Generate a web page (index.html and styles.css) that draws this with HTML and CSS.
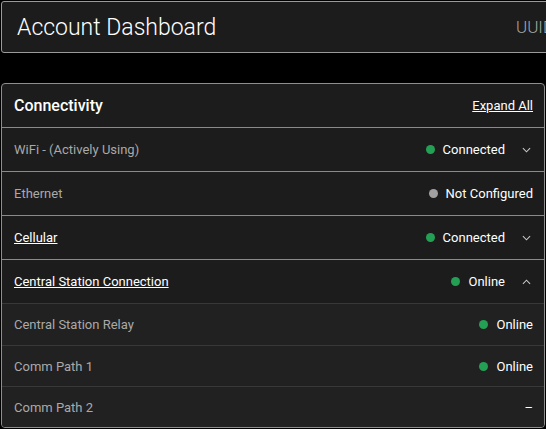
FILE: index.html
```html
<!DOCTYPE html>
<html>
<head>
<meta charset="utf-8">
<link rel="stylesheet" href="styles.css">
</head>
<body>
<div class="page">
  <header class="top-card">
    <h1 class="title">Account Dashboard</h1>
    <span class="uuid">UUID: 7f3c9a2e-4b1d</span>
  </header>

  <section class="card">
    <div class="card-head">
      <h2 class="card-title">Connectivity</h2>
      <a class="expand" href="#">Expand All</a>
    </div>

    <div class="row">
      <span class="label">WiFi - (Actively Using)</span>
      <span class="status"><i class="dot green"></i>Connected</span>
      <svg class="chev" viewBox="0 0 10 6"><path d="M1 1 L5 5 L9 1" /></svg>
    </div>
    <div class="row">
      <span class="label">Ethernet</span>
      <span class="status"><i class="dot gray"></i>Not Configured</span>
    </div>
    <div class="row">
      <a class="label link" href="#">Cellular</a>
      <span class="status"><i class="dot green"></i>Connected</span>
      <svg class="chev" viewBox="0 0 10 6"><path d="M1 1 L5 5 L9 1" /></svg>
    </div>
    <div class="row">
      <a class="label link" href="#">Central Station Connection</a>
      <span class="status"><i class="dot green"></i>Online</span>
      <svg class="chev" viewBox="0 0 10 6"><path d="M1 5 L5 1 L9 5" /></svg>
    </div>

    <div class="sub">
      <div class="sub-row first">
        <span class="label">Central Station Relay</span>
        <span class="status"><i class="dot green"></i>Online</span>
      </div>
      <div class="sub-row">
        <span class="label">Comm Path 1</span>
        <span class="status"><i class="dot green"></i>Online</span>
      </div>
      <div class="sub-row">
        <span class="label">Comm Path 2</span>
        <span class="status">–</span>
      </div>
    </div>
  </section>
</div>
</body>
</html>
```

FILE: styles.css
```css
html, body {
  margin: 0;
  padding: 0;
  background: #000;
  overflow: hidden;
}
body {
  font-family: Roboto, "Liberation Sans", sans-serif;
  color: #fff;
}
.page {
  padding: 1px;
  width: 544px;
}
.top-card {
  display: flex;
  align-items: center;
  width: 640px;
  height: 50px;
  box-sizing: content-box;
  border: 1px solid #9a9a9a;
  border-radius: 3px;
  background: #1c1c1c;
  padding: 0 0 0 15px;
}
.title {
  margin: 0;
  font-size: 23px;
  font-weight: 300;
  color: #fff;
}
.uuid {
  margin-left: auto;
  width: 141px;
  font-size: 17px;
  font-weight: 300;
  color: #a3aaa5;
  white-space: nowrap;
  overflow: hidden;
}
.card {
  margin-top: 30px;
  border: 1px solid #8e8e8e;
  border-radius: 4px;
  background: #1c1c1c;
  overflow: hidden;
}
.card-head {
  display: flex;
  align-items: center;
  justify-content: space-between;
  height: 43px;
  padding: 0 11px 0 12px;
}
.card-title {
  margin: 0;
  font-size: 16px;
  font-weight: 500;
}
.expand {
  color: #fff;
  font-size: 13px;
  font-weight: 400;
  text-decoration: underline;
}
.row, .sub-row {
  display: flex;
  align-items: center;
  padding: 0 11px 0 12px;
  font-size: 13px;
}
.row {
  height: 43px;
  border-top: 1px solid #8a8a8a;
}
.label {
  flex: 1;
  color: #a9a9a9;
}
.link {
  flex: 0 0 auto;
  margin-right: auto;
  color: #fff;
  font-weight: 400;
  text-decoration: underline;
}
.status {
  display: flex;
  align-items: center;
  font-weight: 400;
  color: #fff;
}
.dot {
  display: inline-block;
  width: 9px;
  height: 9px;
  border-radius: 50%;
  margin-right: 8px;
}
.green { background: #23a053; }
.gray { background: #a0a0a0; }
.chev {
  width: 9px;
  height: 6px;
  margin-left: 17px;
  margin-right: 2px;
  fill: none;
  stroke: #c8c8c8;
  stroke-width: 1.2;
}
.sub {
  background: #212121;
}
.sub-row {
  height: 40px;
  border-top: 1px solid #383838;
}
.sub-row.first {
  height: 41px;
}
```
